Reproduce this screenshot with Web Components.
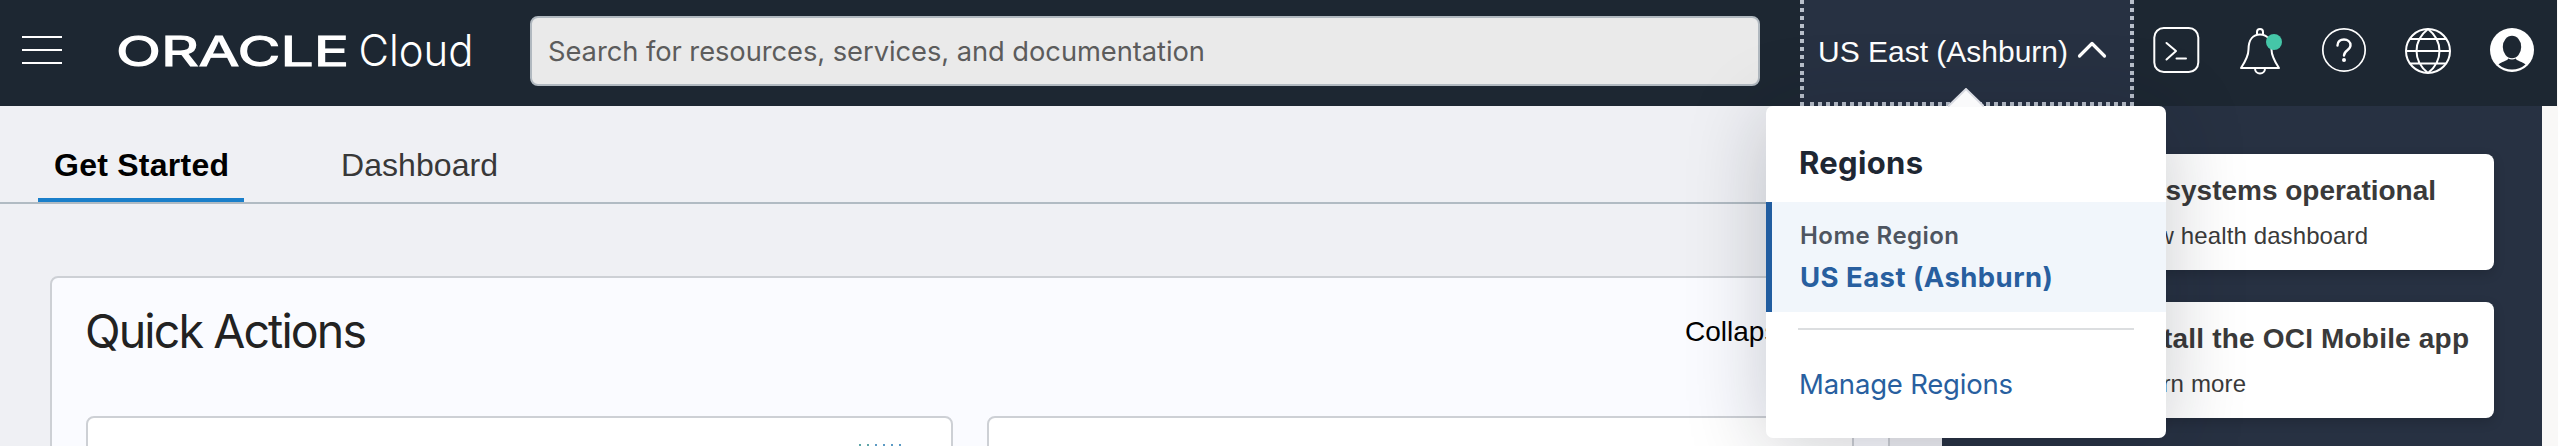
<!DOCTYPE html>
<html lang="en">
<head>
<meta charset="utf-8">
<title>Oracle Cloud</title>
<style>
html,body{margin:0;padding:0;overflow:hidden;background:#eff0f4}
body{width:2558px;height:446px;font-family:"Liberation Sans",Arial,sans-serif}
</style>
</head>
<body>
<cloud-app></cloud-app>
<script>
const define=(name,html,ready)=>customElements.define(name,class extends HTMLElement{
  constructor(){super();this.attachShadow({mode:'open'}).innerHTML=html}
  connectedCallback(){if(ready)ready.call(this)}
});

/* Text line whose tracking is adjusted so that it spans the "span" attribute in pixels. */
define('fit-text',`<style>:host{display:block;white-space:nowrap;line-height:1}span{display:inline-block}</style><span><slot></slot></span>`,function(){
  const s=this.shadowRoot.querySelector('span'),want=+this.getAttribute('span');
  const n=this.textContent.length,w=s.getBoundingClientRect().width;
  if(want)s.style.letterSpacing=((want-w)/(n-1)).toFixed(3)+'px';
});

define('brand-logo',`<style>
:host{display:block;width:360px;height:46px}svg{display:block;overflow:visible}
text{fill:#fff}
.o{font:400 40.500px Inter,sans-serif}
.c{font:300 44px Inter,sans-serif}
</style>
<svg width="360" height="46" viewBox="0 0 360 46" role="img" aria-label="Oracle Cloud">
<text class="o" x="-2" y="40.500" textLength="233" lengthAdjust="spacingAndGlyphs" stroke="#fff" stroke-width="1.100">ORACLE</text>
<text class="c" x="240.500" y="41" textLength="115" lengthAdjust="spacingAndGlyphs">Cloud</text>
</svg>`);

define('search-box',`<style>
:host{display:flex;align-items:center;box-sizing:border-box;width:1230px;height:70px;border:2px solid #b1b9c0;border-radius:8px;background:#eaeaea;padding:2px 0 0 16px;color:#5c5c5c;font:27.3px Inter,sans-serif}
</style><fit-text span="657">Search for resources, services, and documentation</fit-text>`);

define('region-button',`<style>
:host{display:flex;align-items:center;position:relative;box-sizing:border-box;width:334px;height:106px;padding:0 0 3px 18px;color:#fff;font-size:30px;
background:repeating-linear-gradient(180deg,#b9c0cb 0 4px,transparent 4px 7.846px) 0 0/4px 106px no-repeat,
repeating-linear-gradient(180deg,#b9c0cb 0 4px,transparent 4px 7.846px) 330px 0/4px 106px no-repeat,
repeating-linear-gradient(90deg,#b9c0cb 0 4px,transparent 4px 8px) 10px 102px/316px 4px no-repeat,#273142}
svg{display:block;margin:-4px 0 0 8px}
</style><fit-text span="250">US East (Ashburn)</fit-text>
<svg width="32" height="20" viewBox="0 0 32 20"><path d="M3.500 16 16 3.500l12.500 12.500" fill="none" stroke="#fff" stroke-width="3.200" stroke-linecap="round" stroke-linejoin="round"/></svg>`);

define('header-icons',`<style>
:host{display:flex;gap:36px;align-items:center}
svg{display:block;width:48px;height:48px;fill:none;stroke:#fff;stroke-width:2;overflow:visible}
</style>
<svg viewBox="0 0 48 48"><rect x="2.300" y="3" width="44" height="44" rx="9.500"/><path d="M14.500 18l9.500 8-9.500 8.500M24.500 33.500h9.500" stroke-linecap="round" stroke-linejoin="round"/></svg>
<svg viewBox="0 0 48 48"><path d="M5 43c4-6 7.500-11.500 7.500-18.500C12.500 14 17.500 9.500 24 9.500S35.500 14 35.500 24.500C35.500 31.500 39 37 43 43Z" stroke-linejoin="round"/><path d="M21 9V7a3 3 0 0 1 6 0V9M19 43.500a5 5 0 0 0 10 0"/><circle cx="38" cy="17" r="8" fill="#45c6a8" stroke="none"/></svg>
<svg viewBox="0 0 48 48"><circle cx="24" cy="25" r="21.200" stroke-width="1.700"/><path d="M17.500 20.500c0-4 2.800-6 6.500-6s6.500 2.300 6.500 5.800c0 5-6.500 4.800-6.500 10.200" stroke-width="2.400" stroke-linecap="round"/><circle cx="24" cy="35" r="2" fill="#fff" stroke="none"/></svg>
<svg viewBox="0 0 48 48"><circle cx="24" cy="26" r="22"/><path d="M24 4C8.700 16 8.700 36 24 48M24 4c15.300 12 15.300 32 0 44M2 26h44M6 14h36M6 38.500h36"/></svg>
<svg viewBox="0 0 48 48"><circle cx="24" cy="25" r="22" fill="#fff" stroke="none"/><ellipse cx="24" cy="22" rx="9.200" ry="11.200" fill="#1d2732" stroke="none"/><path d="M20 33.500v.5c-1 2-6.500 2.500-9.500 5.500a20.500 20.500 0 0 0 27 0c-3-3-8.500-3.500-9.500-5.500v-.5q-4 1.800-8 0Z" fill="#1d2732" stroke="none"/></svg>`);

define('app-header',`<style>
:host{display:flex;align-items:center;width:2557px;height:106px;background:#1d2732}
.menu{width:40px;height:28px;margin:0 56px 6px 22px;display:flex;flex-direction:column;justify-content:space-between}
.menu i{height:2px;background:#fff}
brand-logo{margin:-10px 52px 0 0}search-box{margin:-4px 40px 0 0}header-icons{margin:-8px 0 0 18px}
</style>
<div class="menu"><i></i><i></i><i></i></div><brand-logo></brand-logo><search-box></search-box><region-button></region-button><header-icons></header-icons>`);

define('tab-bar',`<style>
:host{display:flex;box-sizing:border-box;height:98px;border-bottom:2px solid #b1bbc3;padding-left:38px;font-size:32px;color:#383838}
div{box-sizing:border-box;height:96px;padding:43px 0 0 16px}
.on{width:206px;font-weight:700;color:#000;border-bottom:4px solid #1a7fca}
.off{margin-left:81px}
</style><div class="on"><fit-text span="175">Get Started</fit-text></div><div class="off"><fit-text span="157">Dashboard</fit-text></div>`);

define('quick-actions',`<style>
:host{display:block;box-sizing:border-box;width:1840px;height:300px;margin:72px 0 0 50px;border:2px solid #cdd0d5;border-radius:8px;background:#fafbff;padding:0 34px}
header{display:flex;justify-content:space-between;height:138px}
.t{font:46.5px Inter,sans-serif;color:#222;padding-top:25px;margin-left:-1px}
.c{font-size:28px;color:#000;padding:40px 60px 0 0}
.cards{display:grid;grid-template-columns:1fr 1fr;gap:34px}
.card{box-sizing:border-box;height:150px;border:2px solid #cdd0d5;border-radius:8px;background:#fff;padding:26px 0 0 771px}
.dots{display:flex;gap:6px}.dots i{width:2px;height:3px;background:#5b9ac4}.dots i:nth-child(-n+2){background:#5fa5a8}
</style><header><fit-text class="t" span="282">Quick Actions</fit-text><fit-text class="c">Collapse</fit-text></header>
<div class="cards"><div class="card"><div class="dots"><i></i><i></i><i></i><i></i><i></i><i></i></div></div><div class="card"></div></div>`);

define('info-card',`<style>
:host{display:block;box-sizing:border-box;height:116px;border-radius:8px;background:#fff;padding:23px 0 0 132px;color:#3a3a3a;box-shadow:0 4px 12px rgba(0,0,0,.16)}
::slotted([slot=title]){font-size:28px;font-weight:700}
::slotted([slot=link]){font-size:24px;margin-top:19px}
</style><slot name="title"></slot><slot name="link"></slot>`);

define('side-panel',`<style>
:host{display:flex;flex-direction:column;gap:32px;box-sizing:border-box;width:600px;height:340px;background:#273142;padding:48px 48px 0}
</style><info-card><fit-text slot="title" span="314">All systems operational</fit-text><fit-text slot="link" span="246">View health dashboard</fit-text></info-card>
<info-card><fit-text slot="title" span="347">Install the OCI Mobile app</fit-text><fit-text slot="link" span="124">Learn more</fit-text></info-card>`);

define('region-menu',`<style>
:host{display:block;position:absolute;left:1766px;top:106px;width:400px;height:332px;border-radius:7px;background:#fff;box-shadow:0 8px 80px rgba(20,25,35,.22);font-family:Inter,sans-serif;color:#1e2733}
.tip{position:absolute;left:182px;top:-18px;display:block}
h2{margin:0;height:96px;box-sizing:border-box;padding:41px 0 0 33px;font-size:31px;font-weight:700}
.sel{box-sizing:border-box;height:110px;border-left:6px solid #215da0;background:#f1f6fb;padding:22px 0 0 28px;font-weight:600;font-size:24px;color:#4e5560}
.sel .n{font-size:27.500px;font-weight:650;color:#285f9f;margin-top:16px}
hr{margin:16px 32px 0;border:0;height:2px;background:#dcdee0}
.m{font-size:27.500px;color:#285f9f;padding:41px 0 0 33px}
</style><svg class="tip" width="36" height="19" viewBox="0 0 36 19"><path d="M0 19 18 1l18 18Z" fill="#fafafb"/><path d="M0 18.500 18 1l18 17.500" fill="none" stroke="#d9dbe2" stroke-width="2"/></svg>
<h2><fit-text span="124">Regions</fit-text></h2>
<div class="sel"><fit-text span="159">Home Region</fit-text><fit-text class="n" span="253">US East (Ashburn)</fit-text></div>
<hr><fit-text class="m" span="214">Manage Regions</fit-text>`);

define('cloud-app',`<style>
:host{display:block;position:relative;width:2558px;height:446px;overflow:hidden;background:#f9f8f7}
.body{display:flex;height:340px}main{width:1942px;background:#eff0f4}
</style><app-header></app-header><div class="body"><main><tab-bar></tab-bar><quick-actions></quick-actions></main><side-panel></side-panel></div><region-menu></region-menu>`);
</script>
</body>
</html>
